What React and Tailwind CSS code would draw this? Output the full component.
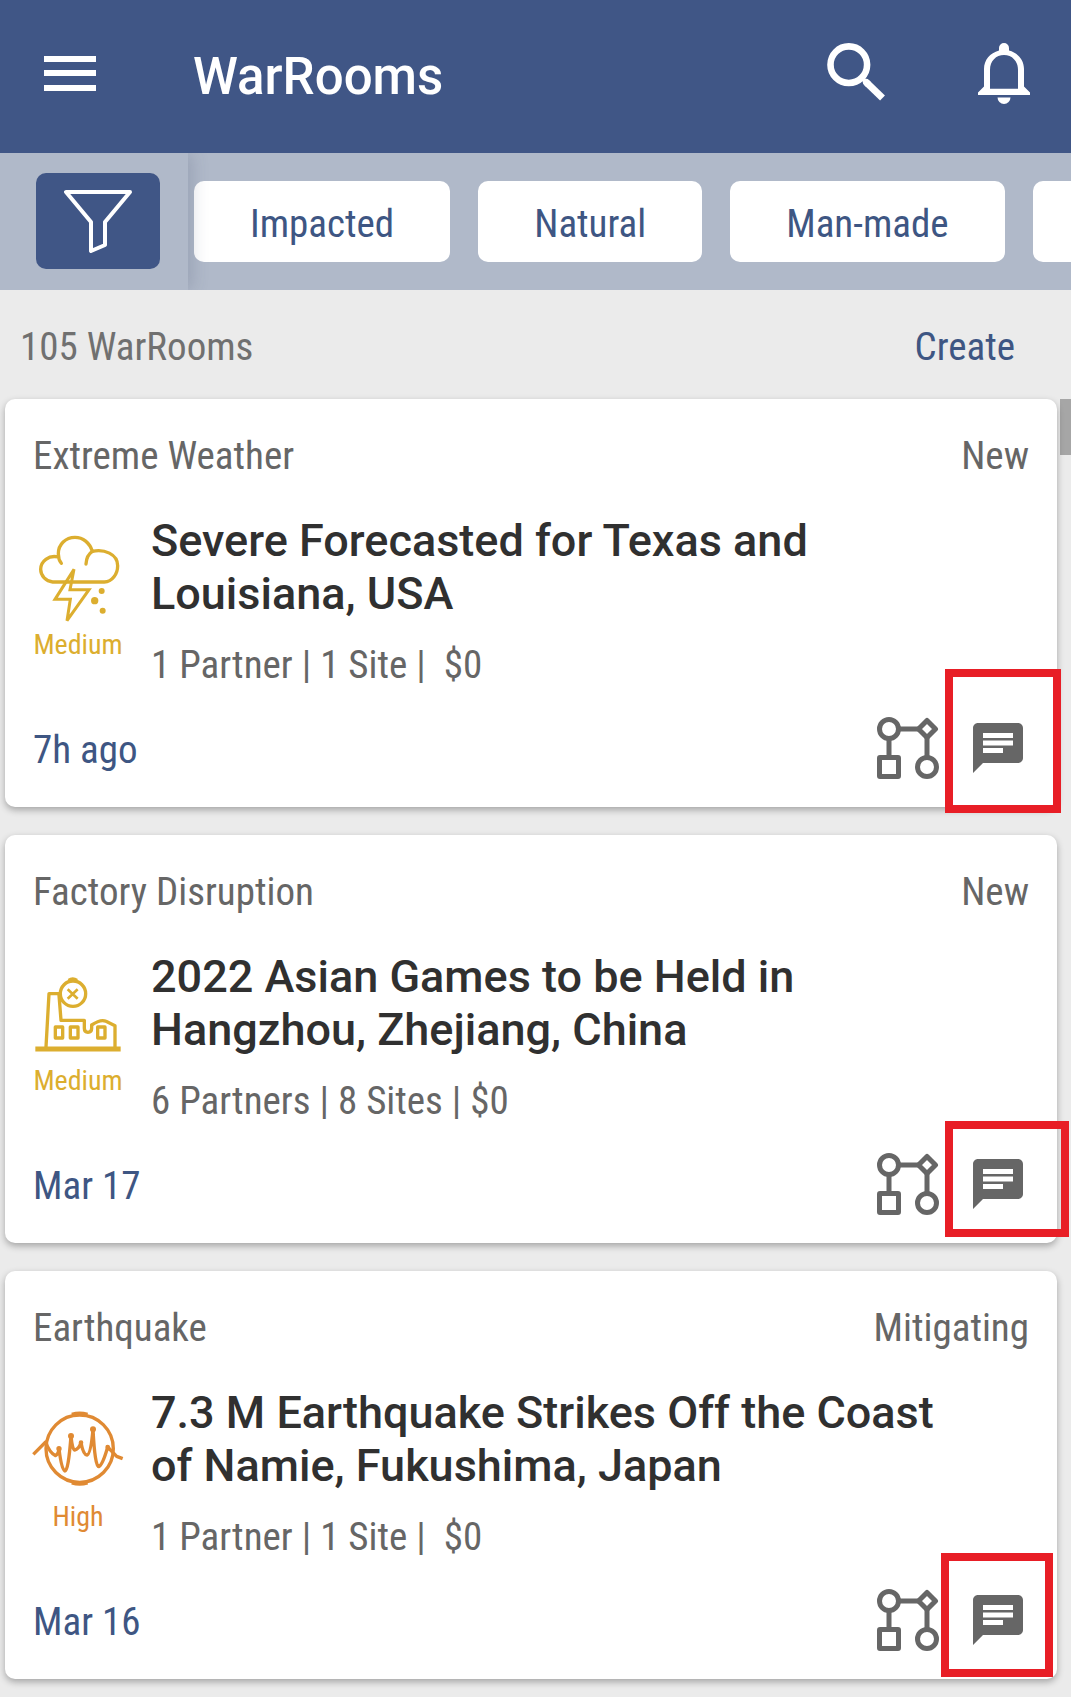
import React, { useState } from "react";
import { MdChat } from "react-icons/md";

const FILTERS = ["Impacted", "Natural", "Man-made"];

const WARROOMS = [
    {
        id: 1,
        type: "Extreme Weather",
        status: "New",
        title: "Severe Forecasted for Texas and Louisiana, USA",
        summary: "1 Partner | 1 Site |  $0",
        severity: "Medium",
        date: "7h ago",
        icon: "storm",
        highlight: "-right-1 -bottom-1.5 w-[116px] h-36",
    },
    {
        id: 2,
        type: "Factory Disruption",
        status: "New",
        title: "2022 Asian Games to be Held in Hangzhou, Zhejiang, China",
        summary: "6 Partners | 8 Sites | $0",
        severity: "Medium",
        date: "Mar 17",
        icon: "factory",
        highlight: "-right-3 bottom-1.5 w-[124px] h-[116px]",
    },
    {
        id: 3,
        type: "Earthquake",
        status: "Mitigating",
        title: "7.3 M Earthquake Strikes Off the Coast of Namie, Fukushima, Japan",
        summary: "1 Partner | 1 Site |  $0",
        severity: "High",
        date: "Mar 16",
        icon: "earthquake",
        highlight: "right-1 bottom-0.5 w-28 h-[124px]",
    },
];

const severityColor = {
    Medium: "text-[#dcae2f]",
    High: "text-[#e08a33]",
};

const MenuIcon = () => (
    <svg width="52" height="66" viewBox="0 0 52 66" fill="currentColor" aria-hidden="true">
        <path d="M0 13h52v6H0zM0 27h52v6H0zM0 42h52v6H0z" />
    </svg>
);

const SearchIcon = () => (
    <svg width="58" height="66" viewBox="0 0 58 66" fill="none" stroke="currentColor" aria-hidden="true">
        <circle cx="21.8" cy="21.7" r="18.3" strokeWidth="6.6" />
        <path d="M34 34l6 6" strokeWidth="4" />
        <path d="M39.5 39.5l1 1" strokeWidth="7" strokeLinecap="round" />
        <path d="M40 40l15.5 15" strokeWidth="7" />
    </svg>
);

const BellIcon = () => (
    <svg width="52" height="66" viewBox="0 0 52 66" fill="currentColor" aria-hidden="true">
        <path
            fillRule="evenodd"
            d="M21 5a5 5 0 0 1 10 0v2.5C40 10 46 17 46 26v17.5l6 6V52H0v-2.5l6-6V26C6 17 12 10 21 7.5zM12 45.7h28V27c0-9-6-15-14-15s-14 6-14 15z"
        />
        <path d="M19.5 54.5h13a6.5 6.5 0 0 1-13 0z" />
    </svg>
);

const FunnelIcon = () => (
    <svg
        width="68"
        height="64"
        viewBox="0 0 68 64"
        fill="none"
        stroke="currentColor"
        strokeWidth="4"
        strokeLinejoin="round"
        aria-hidden="true"
    >
        <path d="M2 3h64L41 33v23l-14 6V33z" />
    </svg>
);

const WorkflowIcon = () => (
    <svg width="62" height="62" viewBox="0 0 62 62" fill="none" stroke="currentColor" strokeWidth="5" aria-hidden="true">
        <circle cx="12" cy="12" r="9.5" />
        <circle cx="50" cy="50" r="9.5" />
        <rect x="2.5" y="40.5" width="19" height="19" rx="0.5" />
        <path d="M50 3.5L58.5 12 50 20.5 41.5 12z" strokeLinejoin="round" />
        <path d="M21.5 12h20M12 21.5v19M50 20.5v20" />
    </svg>
);

const StormIcon = () => (
    <svg
        className="overflow-visible"
        width="88"
        height="88"
        viewBox="42 75 264 264"
        fill="none"
        stroke="currentColor"
        strokeWidth="10"
        strokeLinecap="round"
        aria-hidden="true"
    >
        <path d="M124 160c-8-10-9-20-9-29 0-28 22-49 50-49 24 0 44 16 52 42 35-8 76 8 76 43 0 24-16 49-40 49H98c-20-2-36-18-36-38 0-24 24-44 53-37" />
        <path d="M198 162c1-18 8-31 19-38" />
        <path d="M162 178l-57 90h46l-10 64 66-93h-57z" strokeWidth="9" />
        <g fill="currentColor" stroke="none">
            <circle cx="245" cy="243" r="9" />
            <circle cx="224" cy="272" r="11" />
            <circle cx="248" cy="302" r="9" />
        </g>
    </svg>
);

const FactoryIcon = () => (
    <svg
        className="overflow-visible"
        width="88"
        height="88"
        viewBox="42 33 264 264"
        fill="none"
        stroke="currentColor"
        strokeWidth="10"
        strokeLinejoin="round"
        aria-hidden="true"
    >
        <circle cx="159" cy="101" r="38" />
        <path d="M146 61q12-9 25 0" />
        <path d="M143 88l30 28M173 88l-30 28" strokeWidth="8" />
        <path d="M120 101H87l-9 160M117 105l6 76h70v24q0 12 11 12t11-12v-10q28-19 43-11l27 13v64" />
        <rect x="106" y="201" width="22" height="33" />
        <rect x="151" y="201" width="23" height="33" />
        <rect x="233" y="201" width="22" height="33" />
        <path d="M46 267h256" strokeWidth="15" />
    </svg>
);

const EarthquakeIcon = () => (
    <svg
        className="overflow-visible"
        width="88"
        height="88"
        viewBox="42 36 264 264"
        fill="none"
        stroke="currentColor"
        strokeWidth="10"
        strokeLinejoin="round"
        aria-hidden="true"
    >
        <circle cx="179" cy="161" r="101" />
        <path d="M155 57q24-7 48 0M155 265q24 7 48 0" strokeWidth="8" />
        <path d="M40 178L77 141Q88 172 106 182Q115 178 117 161Q125 228 135 228Q145 228 153 123Q157 165 164 165Q176 163 183 143Q190 180 201 180Q212 178 219 103Q225 215 236 215Q248 210 263 156L290 184 308 191" />
        <g fill="currentColor" strokeWidth="4">
            <circle cx="117" cy="161" r="6" />
            <circle cx="153" cy="123" r="7" />
            <circle cx="183" cy="143" r="5" />
            <circle cx="219" cy="103" r="7" />
            <circle cx="263" cy="156" r="5" />
        </g>
    </svg>
);

const typeIcons = {
    storm: StormIcon,
    factory: FactoryIcon,
    earthquake: EarthquakeIcon,
};

const WarRoomCard = ({ room }) => {
    const TypeIcon = typeIcons[room.icon];

    return (
        <article className="relative bg-white rounded-[10px] shadow-[0_3px_7px_rgba(0,0,0,0.3)] px-7 pt-[31px] pb-7 text-[#666666]">
            <div className="flex justify-between">
                <span>{room.type}</span>
                <span>{room.status}</span>
            </div>

            <div className="flex gap-7 mt-8">
                <div className={`w-[90px] shrink-0 flex flex-col items-center gap-1 pt-[21px] ${severityColor[room.severity]}`}>
                    <TypeIcon />
                    <span className="text-[28px] leading-9">{room.severity}</span>
                </div>
                <div className="flex-1 pr-16">
                    <h2 className="font-[Roboto,sans-serif] font-medium text-[45px] leading-[53px] text-[#303030]">
                        {room.title}
                    </h2>
                    <p className="mt-[19px] whitespace-pre-wrap">{room.summary}</p>
                </div>
            </div>

            <div className="flex items-center justify-between mt-[26px]">
                <time className="pt-1 text-[#3e5683]">{room.date}</time>
                <div className="flex items-center gap-[29px] pr-px">
                    <button type="button" aria-label="Workflow">
                        <WorkflowIcon />
                    </button>
                    <button type="button" aria-label="Chat">
                        <MdChat size={60} />
                    </button>
                </div>
            </div>

            <div className={`absolute border-8 border-[#e81e26] pointer-events-none ${room.highlight}`}></div>
        </article>
    );
};

const App = () => {
    const [activeFilter, setActiveFilter] = useState(null);

    return (
        <div className="min-h-screen overflow-hidden bg-[#ebebeb] font-['Roboto_Condensed','Liberation_Sans_Narrow',Roboto,sans-serif] text-[39px] leading-[52px]">
            <header className="flex items-center h-[153px] pl-11 pr-[41px] pb-px bg-[#405686] text-white">
                <button type="button" aria-label="Menu">
                    <MenuIcon />
                </button>
                <h1 className="ml-[97px] pt-0.5 font-[Roboto,sans-serif] font-medium text-[51px] leading-14">WarRooms</h1>
                <div className="ml-auto flex gap-[93px]">
                    <button type="button" aria-label="Search">
                        <SearchIcon />
                    </button>
                    <button type="button" aria-label="Notifications">
                        <BellIcon />
                    </button>
                </div>
            </header>

            <nav className="flex h-[137px] bg-[#b0b9c9] overflow-hidden">
                <div className="relative z-10 shrink-0 pt-5 pl-9 pr-7 bg-[#b0b9c9] shadow-[4px_0_16px_rgba(60,70,100,0.2)]">
                    <button
                        type="button"
                        aria-label="Filter"
                        className="flex items-center justify-center w-31 h-24 rounded-[10px] bg-[#405686] text-white"
                    >
                        <FunnelIcon />
                    </button>
                </div>
                <div className="flex flex-1 items-center gap-7 pl-1.5 overflow-hidden">
                    {FILTERS.map((filter) => (
                        <button
                            key={filter}
                            type="button"
                            aria-pressed={activeFilter === filter}
                            onClick={() => setActiveFilter(filter)}
                            className="shrink-0 h-[81px] px-14 pt-1 rounded-[10px] bg-white text-[#3e5683]"
                        >
                            {filter}
                        </button>
                    ))}
                    <button
                        type="button"
                        aria-label="More filters"
                        className="shrink-0 w-56 h-[81px] rounded-[10px] bg-white"
                    ></button>
                </div>
            </nav>

            <div className="flex justify-between pl-5 pr-14 pt-[31px] pb-[26px]">
                <span className="text-[#707070]">105 WarRooms</span>
                <a href="#create" className="text-[#3e5683]">
                    Create
                </a>
            </div>

            <main className="flex items-start pl-[5px] pb-[18px]">
                <div className="flex-1 flex flex-col gap-7">
                    {WARROOMS.map((room) => (
                        <WarRoomCard key={room.id} room={room} />
                    ))}
                </div>
                <div className="ml-[3px] w-[11px] h-14 bg-[#a6a6a6]"></div>
            </main>
        </div>
    );
};

export default App;
